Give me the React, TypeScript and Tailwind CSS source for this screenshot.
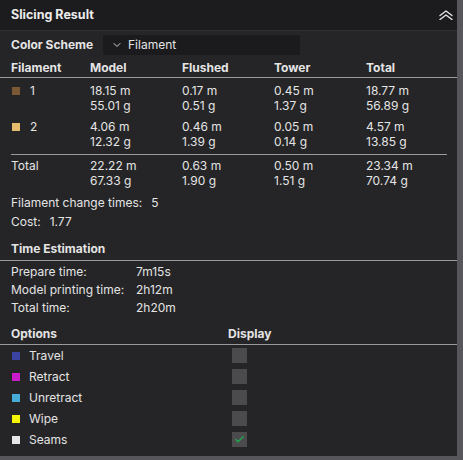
import { ChevronDown, Check } from "lucide-react";

type Filament = {
    id: string;
    color: string;
    model: [string, string];
    flushed: [string, string];
    tower: [string, string];
    total: [string, string];
};

const filaments: Filament[] = [
    { id: "1", color: "bg-[#7a5836]", model: ["18.15 m", "55.01 g"], flushed: ["0.17 m", "0.51 g"], tower: ["0.45 m", "1.37 g"], total: ["18.77 m", "56.89 g"] },
    { id: "2", color: "bg-[#e6bd6c]", model: ["4.06 m", "12.32 g"], flushed: ["0.46 m", "1.39 g"], tower: ["0.05 m", "0.14 g"], total: ["4.57 m", "13.85 g"] },
];

const options = [
    { label: "Travel", color: "bg-[#3b44a0]", checked: false },
    { label: "Retract", color: "bg-[#c81ccc]", checked: false },
    { label: "Unretract", color: "bg-[#46acd6]", checked: false },
    { label: "Wipe", color: "bg-[#f5f500]", checked: false },
    { label: "Seams", color: "bg-[#e6e6e6]", checked: true },
];

const cols = "grid grid-cols-[79px_92px_92px_92px_1fr] pl-[11px]";

function Pair({ v }: { v: [string, string] }) {
    return (
        <div className="flex flex-col leading-[15px]">
            <span>{v[0]}</span>
            <span>{v[1]}</span>
        </div>
    );
}

// collapse arrow in the panel header
function CollapseIcon() {
    return (
        <svg width="14" height="10" viewBox="0 0 14 10" fill="none" stroke="#e2e2e2" strokeWidth="1.4" strokeLinecap="round" strokeLinejoin="round">
            <path d="M1 5.5 L7 1 L13 5.5" />
            <path d="M1 9.5 L7 5 L13 9.5" />
        </svg>
    );
}

export default function App() {
    return (
        <div className="w-[463px] h-[460px] bg-[#57575b] overflow-hidden" style={{ fontFamily: 'Inter, "Noto Sans", sans-serif' }}>
            <div className="w-[457px] h-[456px] bg-[#252527] text-[#e4e4e4] text-[12px] flex flex-col">
                {/* Header */}
                <div className="h-[31px] bg-[#1c1c1e] border-b border-[#2e2e30] flex items-center justify-between pl-[11px] pr-[4px]">
                    <span className="font-bold text-[12.5px] text-[#ececec]">Slicing Result</span>
                    <CollapseIcon />
                </div>

                {/* Color scheme */}
                <div className="flex items-center pl-[11px] pt-[3px] h-[24px]">
                    <span className="font-bold w-[92px] text-[12px]">Color Scheme</span>
                    <div className="w-[197px] h-[20px] bg-[#1b1b1d] rounded-[2px] flex items-center pl-[8px] gap-[5px]">
                        <ChevronDown className="w-[12px] h-[12px] text-[#d0d0d0]" strokeWidth={2} />
                        <span>Filament</span>
                    </div>
                </div>

                {/* Filament table */}
                <div className={`${cols} mt-[3px] h-[20px] items-center font-bold text-[12px] border-b border-[#9a9a9c]`}>
                    <span>Filament</span>
                    <span>Model</span>
                    <span>Flushed</span>
                    <span>Tower</span>
                    <span>Total</span>
                </div>
                {filaments.map((f, i) => (
                    <div key={f.id} className={`${cols} ${i === 0 ? "pt-[5px]" : "pt-[6px]"}`}>
                        <div className="flex items-start gap-[10px] leading-[15px]">
                            <span className={`w-[8px] h-[8px] mt-[4px] ml-[1px] ${f.color}`} />
                            <span>{f.id}</span>
                        </div>
                        <Pair v={f.model} />
                        <Pair v={f.flushed} />
                        <Pair v={f.tower} />
                        <Pair v={f.total} />
                    </div>
                ))}
                <div className="mx-[11px] w-[436px] mt-[5px] border-b border-[#9a9a9c]" />
                <div className={`${cols} pt-[3px]`}>
                    <span className="leading-[15px]">Total</span>
                    <Pair v={["22.22 m", "67.33 g"]} />
                    <Pair v={["0.63 m", "1.90 g"]} />
                    <Pair v={["0.50 m", "1.51 g"]} />
                    <Pair v={["23.34 m", "70.74 g"]} />
                </div>

                <div className="pl-[11px] mt-[5px] h-[19px] leading-[19px]">
                    Filament change times:<span className="ml-[9px]">5</span>
                </div>
                <div className="pl-[11px] h-[19px] leading-[19px]">
                    Cost:<span className="ml-[9px]">1.77</span>
                </div>

                {/* Time estimation */}
                <div className="h-[30px] pt-[9px] pl-[11px] leading-[17px] font-bold text-[12px] border-b border-[#9a9a9c]">
                    Time Estimation
                </div>
                <div className="pt-[2px] pl-[11px] flex flex-col">
                    {[
                        ["Prepare time:", "7m15s"],
                        ["Model printing time:", "2h12m"],
                        ["Total time:", "2h20m"],
                    ].map(([k, v]) => (
                        <div key={k} className="flex h-[18px] leading-[18px]">
                            <span className="w-[125px]">{k}</span>
                            <span>{v}</span>
                        </div>
                    ))}
                </div>

                {/* Options */}
                <div className="h-[28px] pt-[8px] pl-[11px] flex leading-[17px] font-bold text-[12px] border-b border-[#9a9a9c]">
                    <span className="w-[217px]">Options</span>
                    <span>Display</span>
                </div>
                <div className="flex flex-col">
                    {options.map((o) => (
                        <div key={o.label} className="h-[21px] flex items-center pl-[12px]">
                            <span className={`w-[8px] h-[8px] ${o.color}`} />
                            <span className="ml-[9px] w-[203px]">{o.label}</span>
                            <span className="w-[15px] h-[15px] bg-[#4b4b4d] flex items-center justify-center">
                                {o.checked && <Check className="w-[11px] h-[11px] text-[#22a64a]" strokeWidth={3} />}
                            </span>
                        </div>
                    ))}
                </div>
            </div>
        </div>
    );
}
